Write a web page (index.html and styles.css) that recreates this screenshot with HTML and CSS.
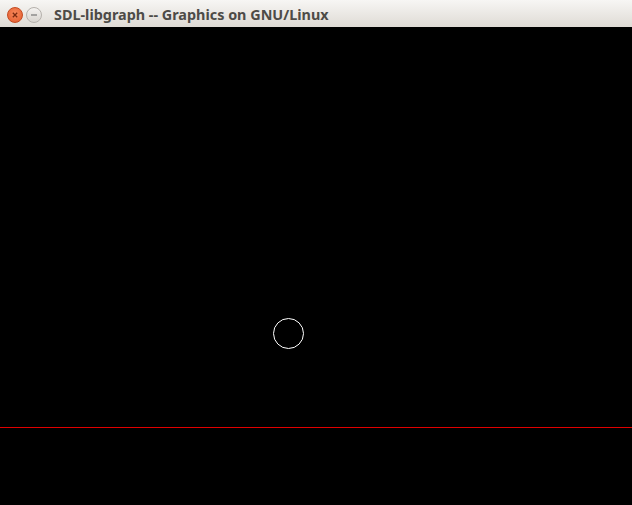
FILE: index.html
```html
<!DOCTYPE html>
<html>
<head>
<meta charset="utf-8">
<link rel="stylesheet" href="styles.css">
</head>
<body>
<div class="window">
  <div class="titlebar">
    <div class="buttons">
      <span class="btn close">
        <svg width="14" height="14" viewBox="0 0 14 14"><path d="M4.8 4.8 L9.2 9.2 M9.2 4.8 L4.8 9.2" stroke="#7a2a10" stroke-width="1.3" fill="none"/></svg>
      </span>
      <span class="btn min">
        <svg width="14" height="14" viewBox="0 0 14 14"><path d="M4 7 H10" stroke="#777" stroke-width="1.2"/></svg>
      </span>
    </div>
    <span class="title">SDL-libgraph -- Graphics on GNU/Linux</span>
  </div>
  <svg class="canvas" width="632" height="478" viewBox="0 0 632 478">
    <circle cx="288.5" cy="306.5" r="15" fill="none" stroke="#fff" stroke-width="1"/>
    <line x1="0" y1="400.5" x2="632" y2="400.5" stroke="#e00000" stroke-width="1"/>
  </svg>
</div>
</body>
</html>
```
FILE: styles.css
```css
html, body {
  margin: 0;
  padding: 0;
  background: #000;
}
.window {
  width: 632px;
  height: 505px;
  display: flex;
  flex-direction: column;
  background: #000;
}
.titlebar {
  height: 27px;
  flex: none;
  display: flex;
  align-items: center;
  background: linear-gradient(#f7f6f4, #dfdbd5);
  font-family: "Noto Sans", "DejaVu Sans", sans-serif;
}
.buttons {
  display: flex;
  gap: 3px;
  padding-left: 7px;
  padding-top: 2px;
}
.btn {
  width: 16px;
  height: 16px;
  border-radius: 50%;
  display: flex;
  align-items: center;
  justify-content: center;
  box-sizing: border-box;
}
.close {
  background: radial-gradient(circle at 50% 40%, #f88a5c, #e25a2c);
  border: 1px solid #c44a20;
}
.min {
  background: linear-gradient(#f4f2f0, #d8d4cf);
  border: 1px solid #b5b1ac;
}
.title {
  margin-left: 12px;
  font-weight: bold;
  font-size: 14.4px;
  color: #4d4b47;
  padding-top: 1px;
}
.canvas {
  display: block;
  flex: none;
}
```
